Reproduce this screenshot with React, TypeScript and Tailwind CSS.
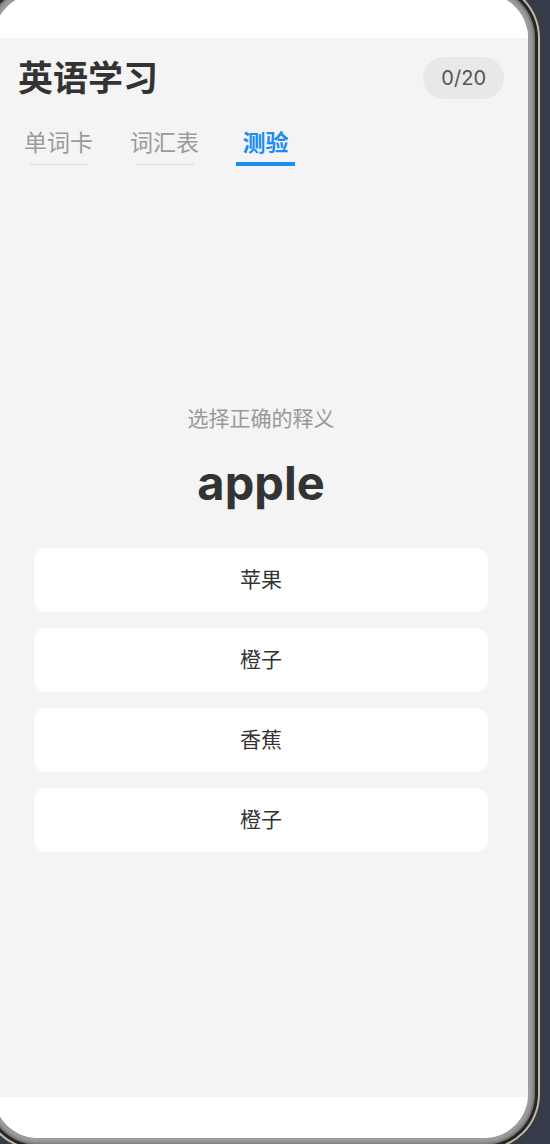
import React from "react";

const FONT = { fontFamily: 'Inter, "Noto Sans CJK SC", sans-serif' };

function Tab({ label, active }: { label: string; active?: boolean }) {
  return (
    <div className="flex flex-col items-center px-[6px]">
      <span
        className={
          active
            ? "text-[23px] leading-[30px] font-bold text-[#1a8cf5]"
            : "text-[23px] leading-[30px] text-[#9a9a9a]"
        }
      >
        {label}
      </span>
      <div className="mt-[4.5px] h-[4px] flex items-center">
        {active ? (
          <div className="h-[4px] w-[59px] bg-[#1a8cf5]" />
        ) : (
          <div className="h-px w-[58px] bg-[#dcdcdc]" />
        )}
      </div>
    </div>
  );
}

export default function App() {
  const options = ["苹果", "橙子", "香蕉", "橙子"];
  return (
    <div className="relative w-[550px] h-[1144px] overflow-hidden bg-[#353b48]" style={FONT}>
      <div className="absolute left-[-20px] top-[-20px] rounded-[58px] bg-[#3c3c3c] p-[2px]">
        <div className="rounded-[56px] bg-[#bfbaac] p-[2px]">
          <div className="rounded-[54px] bg-[#262626] p-[3px]">
            <div className="rounded-[51px] bg-[#9c9c9c] p-[7px] shadow-[inset_0_0_4px_#333]">
              <div className="w-[534px] h-[1144px] rounded-[44px] overflow-hidden bg-white flex flex-col">
                <div className="h-[44px] bg-white shrink-0" />
                <div className="h-[1059px] bg-[#f4f4f4] flex flex-col px-[24px] shrink-0">
                  <div className="pt-[19px] flex items-center justify-between">
                    <h1 className="text-[35px] leading-[42px] font-bold text-[#333]">英语学习</h1>
                    <div className="h-[42px] px-[18px] rounded-full bg-[#e8e8e8] flex items-center text-[20px] text-[#555]">
                      0/20
                    </div>
                  </div>
                  <div className="mt-[28.5px] flex gap-[25px]">
                    <Tab label="单词卡" />
                    <Tab label="词汇表" />
                    <Tab label="测验" active />
                  </div>
                  <div className="flex-1 flex flex-col items-center justify-center px-[16px] pb-[6px]">
                    <p className="text-[21px] leading-[28px] text-[#999]">选择正确的释义</p>
                    <p className="mt-[22px] text-[47px] leading-[56px] font-bold text-[#333]">apple</p>
                    <div className="mt-[36.5px] w-full flex flex-col gap-[16px]">
                      {options.map((o, i) => (
                        <div
                          key={i}
                          className="h-[64px] w-full rounded-[12px] bg-white flex items-center justify-center text-[21px] text-[#333]"
                        >
                          {o}
                        </div>
                      ))}
                    </div>
                  </div>
                </div>
                <div className="flex-1 bg-white" />
              </div>
            </div>
          </div>
        </div>
      </div>
    </div>
  );
}
